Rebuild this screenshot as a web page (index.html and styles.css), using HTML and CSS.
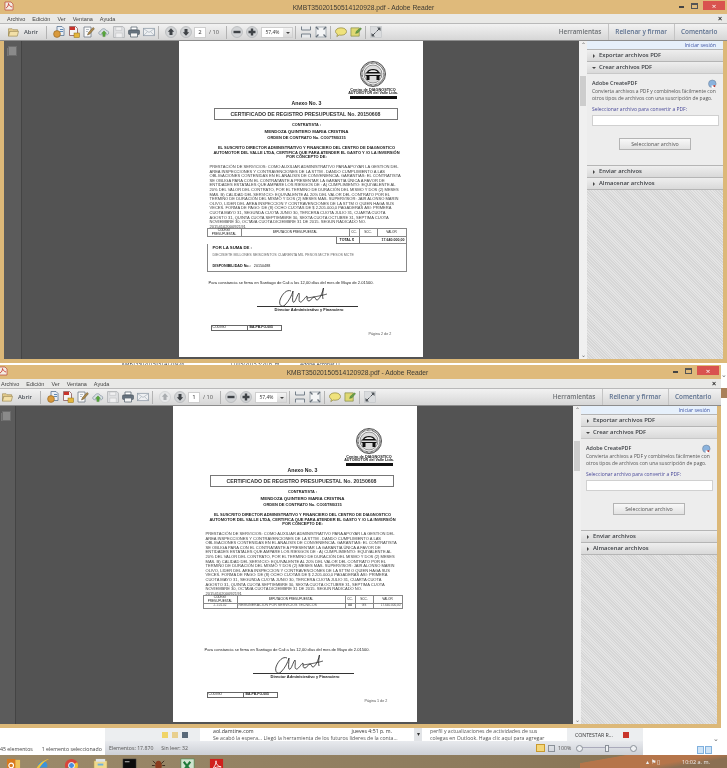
FILE: index.html
```html
<!DOCTYPE html>
<html lang="es">
<head>
    <meta charset="UTF-8">
    <title>KMBT35020150514120928.pdf - Adobe Reader</title>
    <link rel="stylesheet" href="styles.css">
</head>
<body>

<svg class="sprite" width="0" height="0">
    <symbol id="i-folder" viewBox="0 0 12 10"><path d="M.5 1.500h4l1 1h5v2h-9l-1 5z" fill="#e8cf8e" stroke="#9a8653" stroke-width=".7"/><path d="M.5 9.500l1.600-5.200h9.400l-1.400 5.200z" fill="#f3e0a8" stroke="#9a8653" stroke-width=".7"/></symbol>
    <symbol id="i-create" viewBox="0 0 12 12"><path d="M4 .5h5l2 2v7H4z" fill="#e9eef5" stroke="#5a7592" stroke-width=".8"/><circle cx="4" cy="8" r="3.400" fill="#d99a3c" stroke="#8b6020" stroke-width=".6"/><path d="M7 3.500h3M7 5.500h3" stroke="#5f89b5"/></symbol>
    <symbol id="i-lock" viewBox="0 0 12 12"><path d="M1.500.5h6l2 2v7h-8z" fill="#f4f4f4" stroke="#8a5555" stroke-width=".8"/><path d="M2 1h5v3H2z" fill="#c9332b"/><rect x="6" y="7" width="5.500" height="4.500" fill="#e5b63c" stroke="#8c6c16" stroke-width=".5"/></symbol>
    <symbol id="i-sign" viewBox="0 0 12 12"><path d="M1 1h7v10H1z" fill="#fafafa" stroke="#6f7a86" stroke-width=".8"/><path d="M3 3.500h3M3 5.500h2" stroke="#9aa3ad" stroke-width=".7"/><path d="M4.500 9l1-2.500L10 1.500l1.400 1.200L6.800 8z" fill="#b08a4a" stroke="#5b4a2a" stroke-width=".5"/></symbol>
    <symbol id="i-cloud" viewBox="0 0 13 11"><path d="M3 8.500C.2 8.500.2 4.800 2.800 4.600 3.400 1.500 8 1 9 4c3-.3 3.700 4.500.6 4.500z" fill="#d9dfe5" stroke="#7d8c99" stroke-width=".7"/><path d="M6.500 4.200L9.200 7H7.700v3.500H5.300V7H3.800z" fill="#58a83c" stroke="#3a7c25" stroke-width=".4"/></symbol>
    <symbol id="i-save" viewBox="0 0 11 11"><path d="M.5.5h8.500l1.500 1.500v8.500H.5z" fill="#dfe0e2" stroke="#b2b4b7" stroke-width=".8"/><path d="M2.500 1h5.500v3H2.500zM2.500 6.500h6v4h-6z" fill="#f0f0f1" stroke="#bcbec1" stroke-width=".5"/></symbol>
    <symbol id="i-print" viewBox="0 0 12 11"><path d="M3 .5h6v3H3z" fill="#fff" stroke="#5d6975" stroke-width=".8"/><rect x=".5" y="3.500" width="11" height="4.500" rx="1" fill="#66727e" stroke="#47525c" stroke-width=".6"/><path d="M2.500 6.500h7v4h-7z" fill="#f4f4f4" stroke="#5d6975" stroke-width=".8"/></symbol>
    <symbol id="i-mail" viewBox="0 0 13 9"><rect x=".5" y=".5" width="12" height="8" fill="#eef0f2" stroke="#8d99a5" stroke-width=".8"/><path d="M.8 1l5.700 4L12.200 1M.8 8.200l4-4M12.200 8.200l-4-4" fill="none" stroke="#a0abb5" stroke-width=".7"/></symbol>
    <symbol id="i-up" viewBox="0 0 12 12"><circle cx="6" cy="6" r="5.500" fill="#d2d4d6" stroke="#a9acaf" stroke-width=".6"/><path d="M6 2.200L9.200 5.800H7.500V9h-3V5.800H2.800z" fill="#3f4347"/></symbol>
    <symbol id="i-up-off" viewBox="0 0 12 12"><circle cx="6" cy="6" r="5.500" fill="#e6e7e8" stroke="#c7c9cb" stroke-width=".6"/><path d="M6 2.200L9.200 5.800H7.500V9h-3V5.800H2.800z" fill="#a9acaf"/></symbol>
    <symbol id="i-down" viewBox="0 0 12 12"><circle cx="6" cy="6" r="5.500" fill="#d2d4d6" stroke="#a9acaf" stroke-width=".6"/><path d="M6 9.800L9.200 6.200H7.500V3h-3v3.200H2.800z" fill="#3f4347"/></symbol>
    <symbol id="i-minus" viewBox="0 0 12 12"><circle cx="6" cy="6" r="5.500" fill="#d2d4d6" stroke="#a9acaf" stroke-width=".6"/><path d="M2.500 4.800h7v2.400h-7z" fill="#3f4347"/></symbol>
    <symbol id="i-plus" viewBox="0 0 12 12"><circle cx="6" cy="6" r="5.500" fill="#d2d4d6" stroke="#a9acaf" stroke-width=".6"/><path d="M4.800 2.500h2.400v2.300h2.300v2.400H7.200v2.300H4.800V7.200H2.500V4.800h2.300z" fill="#3f4347"/></symbol>
    <symbol id="i-fitw" viewBox="0 0 12 12"><path d="M1.500.5v3.500h9V.5M1.500 11.500V8h9v3.500" fill="#e8eaec" stroke="#76808a"/></symbol>
    <symbol id="i-fitp" viewBox="0 0 12 12"><rect x="1" y="1" width="10" height="10" fill="#f4f5f6" stroke="#a3abb2"/><path d="M1 1l2.500 2.500M11 1L8.500 3.500M1 11l2.500-2.500M11 11L8.500 8.500" stroke="#67707a" stroke-width="1.400"/></symbol>
    <symbol id="i-comment" viewBox="0 0 13 11"><path d="M6.500 1C10 1 12.500 2.700 12.500 5S10 9 6.500 9c-.7 0-1.300 0-2-.2L2 10.500l.6-2.700C1.300 7 .5 6 .5 5c0-2.300 2.500-4 6-4z" fill="#efe27c" stroke="#87803b" stroke-width=".7"/></symbol>
    <symbol id="i-note" viewBox="0 0 13 11"><path d="M1 1h9v9H1z" fill="#dfd873" stroke="#7d8545" stroke-width=".7"/><path d="M6 7l1-2.500L11.500 1 12.500 2 8.500 6.500z" fill="#6aa04a" stroke="#3f6b2a" stroke-width=".4"/></symbol>
    <symbol id="i-expand" viewBox="0 0 12 12"><rect x=".5" y=".5" width="11" height="11" fill="#dadcde" stroke="#bfc2c5" stroke-width=".6"/><path d="M7 1.500h3.500V5zM5 10.500H1.500V7z" fill="#4b5055"/><path d="M9 3L6.500 5.500M3 9l2.500-2.500" stroke="#4b5055"/></symbol>
    <symbol id="i-create-big" viewBox="0 0 10 10"><circle cx="4.800" cy="4.800" r="4.200" fill="#8bb3dd" stroke="#6a7f99" stroke-width=".6"/><path d="M4 6.500h4.500v3H4z" fill="#fff"/><path d="M5 7l3-1v3z" fill="#b3302a"/></symbol>
    <symbol id="i-seal" viewBox="0 0 26 26"><circle cx="13" cy="13" r="12.500" fill="#fff" stroke="#222" stroke-width=".8"/><circle cx="13" cy="13" r="11" fill="none" stroke="#444" stroke-width="1.600" stroke-dasharray=".7 .6"/><circle cx="13" cy="13" r="9" fill="#ddd" stroke="#333" stroke-width=".5"/><path d="M7 11c1-4 11-4 12 0l1.500 1v3H5.500v-3z" fill="#111"/><path d="M8.500 11c1-2.500 8-2.500 9 0z" fill="#eee"/><rect x="5.500" y="12.500" width="15" height="1.500" fill="#ddd"/><rect x="6.500" y="15" width="3" height="4" fill="#111"/><rect x="16.500" y="15" width="3" height="4" fill="#111"/></symbol>
    <symbol id="i-sign-a" viewBox="0 0 56 22"><path d="M16 3C12 1 7 6 5 12c-1.500 5 2 8 5 5 4-4 7-10 8-14 0 5-1 9 0 11 2 2 4-7 6-9 1 3-1 8 1 9s5-5 7-6c0 3 0 5 2 5s3-4 5-4 1 3 3 3 6-7 7-15c-1 6-2 11-1 14" fill="none" stroke="#222" stroke-width=".8"/><path d="M32 10c6-1 14-2 20-4" fill="none" stroke="#222" stroke-width=".7"/></symbol>
    <symbol id="i-outlook" viewBox="0 0 16 16"><rect x="5" y="2" width="10" height="12" fill="#f0c35a"/><rect x="1" y="1" width="9" height="14" fill="#d87a1e"/><circle cx="5.500" cy="8" r="2.500" fill="none" stroke="#fff" stroke-width="1.200"/></symbol>
    <symbol id="i-ie" viewBox="0 0 16 16"><path d="M3 9c0-4 5-7 8-5s2 5 2 6H6c.5 2.500 4 2.500 6 .8C11 14 3 15 3 9z" fill="#3c93d9"/><path d="M1 13C2 8 8 2 15 1c-5 2-10 8-12 13z" fill="#f0c33c"/></symbol>
    <symbol id="i-chrome" viewBox="0 0 16 16"><circle cx="8" cy="8" r="7" fill="#d9453a"/><path d="M8 8L2 11.500A7 7 0 0 0 8 15z" fill="#3aa04b"/><path d="M8 8l6-3.500a7 7 0 0 1-6 10.500z" fill="#edc235"/><circle cx="8" cy="8" r="3.200" fill="#4a8de0" stroke="#fff"/></symbol>
    <symbol id="i-explorer" viewBox="0 0 16 16"><rect x="1" y="3" width="14" height="12" fill="#efd98c" stroke="#a78e4c" stroke-width=".6"/><rect x="3" y="1" width="10" height="3" fill="#dde3e8"/><rect x="5" y="6" width="6" height="2" fill="#6db2dd"/></symbol>
    <symbol id="i-cmd" viewBox="0 0 16 16"><rect x="1" y="1" width="14" height="14" fill="#0c0c0c" stroke="#555" stroke-width=".5"/><path d="M3 4h5" stroke="#ccc"/></symbol>
    <symbol id="i-bug" viewBox="0 0 16 16"><ellipse cx="8" cy="8" rx="3.500" ry="5" fill="#8a3c1e"/><path d="M2 3l3 3M14 3l-3 3M1 8h3M15 8h-3M2 14l3-3M14 14l-3-3" stroke="#3a2a1e"/></symbol>
    <symbol id="i-excel" viewBox="0 0 16 16"><rect x="1" y="1" width="14" height="14" fill="#cfe3cf" stroke="#3d8a4c" stroke-width=".6"/><path d="M4 4l7 9M11 4l-7 9" stroke="#1f7a3a" stroke-width="2.200"/></symbol>
    <symbol id="i-reader" viewBox="0 0 16 16"><rect x="1" y="1" width="14" height="14" fill="#d0201c"/><path d="M3 12c3-2 5-7 4.500-9-.5 3 2 6 5.500 6.500-3-.5-7 .5-10 2.500z" fill="none" stroke="#fff" stroke-width=".9"/></symbol>
    <symbol id="i-app" viewBox="0 0 10 10"><path d="M1 1h6l2 2v6H1z" fill="#f3ece0" stroke="#b9443a" stroke-width=".7"/><path d="M2 7c2-1 2.500-3 2.500-4.500C5 4 6 5.500 8 6" fill="none" stroke="#c4261e" stroke-width=".8"/></symbol>
</svg>

<div class="desktop">

    <div class="peek">
        <span class="peek-one">KMBT35020150514120928</span>
        <span class="peek-two">11/05/2015 3:20 p. m.</span>
        <span class="peek-three">Adobe Acrobat D...</span>
    </div>

    <div class="edge-strip">
        <span class="edge-chevron">⌄</span>
        <div class="edge-brown"></div>
    </div>

    <section class="window window-one">
        <header class="title-bar">
            <svg class="app-icon"><use href="#i-app"/></svg>
            <span class="title-text">KMBT35020150514120928.pdf - Adobe Reader</span>
            <div class="win-controls">
                <span class="win-min"></span>
                <span class="win-max"></span>
                <span class="win-close">×</span>
            </div>
        </header>
        <nav class="menu-bar">
            <span>Archivo</span><span>Edición</span><span>Ver</span><span>Ventana</span><span>Ayuda</span>
            <span class="menu-close">×</span>
        </nav>
        <div class="toolbar">
            <svg class="icon-folder"><use href="#i-folder"/></svg>
            <span class="open-label">Abrir</span>
            <i class="sep sep-first"></i>
            <div class="tools"><svg><use href="#i-create"/></svg></div>
            <div class="tools"><svg><use href="#i-lock"/></svg></div>
            <div class="tools"><svg><use href="#i-sign"/></svg></div>
            <div class="tools"><svg><use href="#i-cloud"/></svg></div>
            <div class="tools"><svg><use href="#i-save"/></svg></div>
            <div class="tools"><svg><use href="#i-print"/></svg></div>
            <div class="tools"><svg><use href="#i-mail"/></svg></div>
            <i class="sep"></i>
            <div class="tools nav-first"><svg><use href="#i-up"/></svg></div>
            <div class="tools"><svg><use href="#i-down"/></svg></div>
            <span class="page-input">2</span>
            <span class="page-total">/ 10</span>
            <i class="sep"></i>
            <div class="tools"><svg><use href="#i-minus"/></svg></div>
            <div class="tools"><svg><use href="#i-plus"/></svg></div>
            <span class="zoom-combo"><b>57,4%</b><em></em></span>
            <i class="sep"></i>
            <div class="tools"><svg><use href="#i-fitw"/></svg></div>
            <div class="tools"><svg><use href="#i-fitp"/></svg></div>
            <i class="sep"></i>
            <div class="tools"><svg><use href="#i-comment"/></svg></div>
            <div class="tools"><svg><use href="#i-note"/></svg></div>
            <i class="sep"></i>
            <div class="tools"><svg><use href="#i-expand"/></svg></div>
            <div class="tabs">
                <span class="tab tab-tools">Herramientas</span>
                <span class="tab tab-fill">Rellenar y firmar</span>
                <span class="tab tab-comment">Comentario</span>
            </div>
        </div>
        <div class="main">
            <aside class="nav-pane"><span class="pages-icon"></span></aside>
            <div class="doc-area">
                <article class="page">
                    <div class="doc doc-one">
                        <div class="seal">
                            <svg class="seal-mark"><use href="#i-seal"/></svg>
                            <p class="seal-line">Centro de DIAGNOSTICO</p>
                            <p class="seal-line seal-strong">AUTOMOTOR del Valle Ltda.</p>
                            <div class="seal-bar"></div>
                        </div>
                        <p class="annex">Anexo No. 3</p>
                        <h2 class="cert-box">CERTIFICADO DE REGISTRO PRESUPUESTAL No. 20150608</h2>
                        <p class="center-bold contractor-label">CONTRATISTA :</p>
                        <p class="center-bold contractor-name">MENDOZA QUINTERO MARIA CRISTINA</p>
                        <p class="center-bold contract-no">ORDEN DE CONTRATO No. CO07TM0315</p>
                        <p class="center-bold statement">EL SUSCRITO DIRECTOR ADMINISTRATIVO Y FINANCIERO DEL CENTRO DE DIAGNOSTICO<br>AUTOMOTOR DEL VALLE LTDA, CERTIFICA QUE PARA ATENDER EL GASTO Y /O LA INVERSIÓN<br>POR CONCEPTO DE:</p>
                        <p class="body-text">PRESTACIÓN DE SERVICIOS: COMO AUXILIAR ADMINISTRATIVO PARA APOYAR LA GESTION DEL<br>ÁREA INSPECCIONES Y CONTRAVENCIONES DE LA STTM . DANDO CUMPLIMIENTO A LAS<br>OBLIGACIONES CONTENIDAS EN EL ANÁLISIS DE CONVENIENCIA. GARANTÍAS: EL CONTRATISTA<br>SE OBLIGA PARA CON EL CONTRATANTE A PRESENTAR LA GARANTÍA ÚNICA A FAVOR DE<br>ENTIDADES ESTATALES QUE AMPARE LOS RIESGOS DE : A) CUMPLIMIENTO: EQUIVALENTE AL<br>20% DEL VALOR DEL CONTRATO, POR EL TERMINO DE DURACIÓN DEL MISMO Y DOS (2) MESES<br>MÁS. B) CALIDAD DEL SERVICIO: EQUIVALENTE AL 20% DEL VALOR DEL CONTRATO POR EL<br>TERMINO DE DURACIÓN DEL MISMO Y DOS (2) MESES MÁS. SUPERVISOR: JAIR ALONSO MARIN<br>OLIVO, LIDER DEL ÁREA INSPECCION Y CONTRAVENCIONES DE LA STTM O QUIEN HAGA SUS<br>VECES. FORMA DE PAGO: DE (8) OCHO CUOTAS DE $ 2.205.000,0 PAGADERAS ASI: PRIMERA<br>CUOTA MAYO 31, SEGUNDA CUOTA JUNIO 30, TERCERA CUOTA JULIO 31, CUARTA CUOTA<br>AGOSTO 31, QUINTA CUOTA SEPTIEMBRE 30, SEXTA CUOTA OCTUBRE 31, SEPTIMA CUOTA<br>NOVIEMBRE 30, OCTAVA CUOTA DICIEMBRE 31 DE 2015. SEGUN RADICADO NO.<br>2015410200092191</p>
                        <table class="budget">
                            <tr><th>CODIGO<br>PRESUPUESTAL</th><th>IMPUTACION PRESUPUESTAL</th><th>CC.</th><th>SCC.</th><th>VALOR</th></tr>
                        </table>
                        <div class="total-row"><b>TOTAL $</b><span>17.640.000,00</span></div>
                        <div class="sum-box">
                            <p class="sum-label">POR LA SUMA DE :</p>
                            <p class="sum-words">DIECISIETE MILLONES SEISCIENTOS CUARENTA MIL PESOS M/CTE PESOS MCTE</p>
                            <p class="sum-avail"><b>DISPONIBILIDAD No.:</b> 20150488</p>
                        </div>
                        <p class="closing closing-one">Para constancia se firma en Santiago de Cali a los 12,00 días del mes de Mayo de 2.01500.</p>
                        <div class="sign">
                            <svg class="sign-mark"><use href="#i-sign-a"/></svg>
                            <div class="sign-line"></div>
                            <p class="sign-name">Director Administrativo y Financiero</p>
                        </div>
                        <div class="doc-foot">
                            <div class="code-box"><span>CODIGO</span><b>BA-PB-FO-005</b></div>
                            <span class="page-no">Página 2 de 2</span>
                        </div>
                    </div>
                </article>
            </div>
            <div class="scroll"><span class="arrow">⌃</span><span class="thumb"></span><span class="arrow arrow-down">⌄</span></div>
            <aside class="side">
                <p class="login">Iniciar sesión</p>
                <h3 class="acc">Exportar archivos PDF</h3>
                <h3 class="acc acc-open">Crear archivos PDF</h3>
                <div class="acc-body">
                    <div class="acc-head"><b>Adobe CreatePDF</b><svg><use href="#i-create-big"/></svg></div>
                    <p class="acc-text">Convierta archivos a PDF y combínelos fácilmente con otros tipos de archivos con una suscripción de pago.</p>
                    <p class="acc-pick">Seleccionar archivo para convertir a PDF:</p>
                    <div class="acc-input"></div>
                    <div class="acc-btn">Seleccionar archivo</div>
                </div>
                <h3 class="acc">Enviar archivos</h3>
                <h3 class="acc">Almacenar archivos</h3>
                <div class="hatch"></div>
            </aside>
        </div>
    </section>

    <section class="window window-two">
        <header class="title-bar">
            <svg class="app-icon"><use href="#i-app"/></svg>
            <span class="title-text">KMBT35020150514120928.pdf - Adobe Reader</span>
            <div class="win-controls">
                <span class="win-min"></span>
                <span class="win-max"></span>
                <span class="win-close">×</span>
            </div>
        </header>
        <nav class="menu-bar">
            <span>Archivo</span><span>Edición</span><span>Ver</span><span>Ventana</span><span>Ayuda</span>
            <span class="menu-close">×</span>
        </nav>
        <div class="toolbar">
            <svg class="icon-folder"><use href="#i-folder"/></svg>
            <span class="open-label">Abrir</span>
            <i class="sep sep-first"></i>
            <div class="tools"><svg><use href="#i-create"/></svg></div>
            <div class="tools"><svg><use href="#i-lock"/></svg></div>
            <div class="tools"><svg><use href="#i-sign"/></svg></div>
            <div class="tools"><svg><use href="#i-cloud"/></svg></div>
            <div class="tools"><svg><use href="#i-save"/></svg></div>
            <div class="tools"><svg><use href="#i-print"/></svg></div>
            <div class="tools"><svg><use href="#i-mail"/></svg></div>
            <i class="sep"></i>
            <div class="tools nav-first"><svg><use href="#i-up-off"/></svg></div>
            <div class="tools"><svg><use href="#i-down"/></svg></div>
            <span class="page-input">1</span>
            <span class="page-total">/ 10</span>
            <i class="sep"></i>
            <div class="tools"><svg><use href="#i-minus"/></svg></div>
            <div class="tools"><svg><use href="#i-plus"/></svg></div>
            <span class="zoom-combo"><b>57,4%</b><em></em></span>
            <i class="sep"></i>
            <div class="tools"><svg><use href="#i-fitw"/></svg></div>
            <div class="tools"><svg><use href="#i-fitp"/></svg></div>
            <i class="sep"></i>
            <div class="tools"><svg><use href="#i-comment"/></svg></div>
            <div class="tools"><svg><use href="#i-note"/></svg></div>
            <i class="sep"></i>
            <div class="tools"><svg><use href="#i-expand"/></svg></div>
            <div class="tabs">
                <span class="tab tab-tools">Herramientas</span>
                <span class="tab tab-fill">Rellenar y firmar</span>
                <span class="tab tab-comment">Comentario</span>
            </div>
        </div>
        <div class="main">
            <aside class="nav-pane"><span class="pages-icon"></span></aside>
            <div class="doc-area">
                <article class="page">
                    <div class="doc doc-two">
                        <div class="seal">
                            <svg class="seal-mark"><use href="#i-seal"/></svg>
                            <p class="seal-line">Centro de DIAGNOSTICO</p>
                            <p class="seal-line seal-strong">AUTOMOTOR del Valle Ltda.</p>
                            <div class="seal-bar"></div>
                        </div>
                        <p class="annex">Anexo No. 3</p>
                        <h2 class="cert-box">CERTIFICADO DE REGISTRO PRESUPUESTAL No. 20150608</h2>
                        <p class="center-bold contractor-label">CONTRATISTA :</p>
                        <p class="center-bold contractor-name">MENDOZA QUINTERO MARIA CRISTINA</p>
                        <p class="center-bold contract-no">ORDEN DE CONTRATO No. CO05TM0315</p>
                        <p class="center-bold statement">EL SUSCRITO DIRECTOR ADMINISTRATIVO Y FINANCIERO DEL CENTRO DE DIAGNOSTICO<br>AUTOMOTOR DEL VALLE LTDA, CERTIFICA QUE PARA ATENDER EL GASTO Y /O LA INVERSIÓN<br>POR CONCEPTO DE:</p>
                        <p class="body-text">PRESTACIÓN DE SERVICIOS: COMO AUXILIAR ADMINISTRATIVO PARA APOYAR LA GESTION DEL<br>ÁREA INSPECCIONES Y CONTRAVENCIONES DE LA STTM . DANDO CUMPLIMIENTO A LAS<br>OBLIGACIONES CONTENIDAS EN EL ANÁLISIS DE CONVENIENCIA. GARANTÍAS: EL CONTRATISTA<br>SE OBLIGA PARA CON EL CONTRATANTE A PRESENTAR LA GARANTÍA ÚNICA A FAVOR DE<br>ENTIDADES ESTATALES QUE AMPARE LOS RIESGOS DE : A) CUMPLIMIENTO: EQUIVALENTE AL<br>20% DEL VALOR DEL CONTRATO, POR EL TERMINO DE DURACIÓN DEL MISMO Y DOS (2) MESES<br>MÁS. B) CALIDAD DEL SERVICIO: EQUIVALENTE AL 20% DEL VALOR DEL CONTRATO POR EL<br>TERMINO DE DURACIÓN DEL MISMO Y DOS (2) MESES MÁS. SUPERVISOR: JAIR ALONSO MARIN<br>OLIVO, LIDER DEL ÁREA INSPECCION Y CONTRAVENCIONES DE LA STTM O QUIEN HAGA SUS<br>VECES. FORMA DE PAGO: DE (8) OCHO CUOTAS DE $ 2.205.000,0 PAGADERAS ASI: PRIMERA<br>CUOTA MAYO 31, SEGUNDA CUOTA JUNIO 30, TERCERA CUOTA JULIO 31, CUARTA CUOTA<br>AGOSTO 31, QUINTA CUOTA SEPTIEMBRE 30, SEXTA CUOTA OCTUBRE 31, SEPTIMA CUOTA<br>NOVIEMBRE 30, OCTAVA CUOTA DICIEMBRE 31 DE 2015. SEGUN RADICADO NO.<br>2015410200092191</p>
                        <table class="budget">
                            <tr><th>CODIGO<br>PRESUPUESTAL</th><th>IMPUTACION PRESUPUESTAL</th><th>CC.</th><th>SCC.</th><th>VALOR</th></tr>
                            <tr><td>2.1.01.02</td><td class="left">REMUNERACION POR SERVICIOS TECNICOS</td><td>AA</td><td>GS</td><td class="right">17.640.000,00</td></tr>
                        </table>
                        <p class="closing closing-two">Para constancia se firma en Santiago de Cali a los 12,00 días del mes de Mayo de 2.01500.</p>
                        <div class="sign">
                            <svg class="sign-mark"><use href="#i-sign-a"/></svg>
                            <div class="sign-line"></div>
                            <p class="sign-name">Director Administrativo y Financiero</p>
                        </div>
                        <div class="doc-foot">
                            <div class="code-box"><span>CODIGO</span><b>BA-PB-FO-005</b></div>
                            <span class="page-no">Página 1 de 2</span>
                        </div>
                    </div>
                </article>
            </div>
            <div class="scroll"><span class="arrow">⌃</span><span class="thumb"></span><span class="arrow arrow-down">⌄</span></div>
            <aside class="side">
                <p class="login">Iniciar sesión</p>
                <h3 class="acc">Exportar archivos PDF</h3>
                <h3 class="acc acc-open">Crear archivos PDF</h3>
                <div class="acc-body">
                    <div class="acc-head"><b>Adobe CreatePDF</b><svg><use href="#i-create-big"/></svg></div>
                    <p class="acc-text">Convierta archivos a PDF y combínelos fácilmente con otros tipos de archivos con una suscripción de pago.</p>
                    <p class="acc-pick">Seleccionar archivo para convertir a PDF:</p>
                    <div class="acc-input"></div>
                    <div class="acc-btn">Seleccionar archivo</div>
                </div>
                <h3 class="acc">Enviar archivos</h3>
                <h3 class="acc">Almacenar archivos</h3>
                <div class="hatch"></div>
            </aside>
        </div>
    </section>

    <section class="behind">
        <div class="explorer">
            <span class="count">45 elementos</span>
            <span class="selected">1 elemento seleccionado</span>
        </div>
        <div class="outlook">
            <div class="outlook-top">
                <div class="quick"><i class="q-yellow"></i><i class="q-folder"></i><i class="q-dark"></i></div>
                <div class="mail-row">
                    <div class="mail-from"><span>aol.damtine.com</span><span>jueves 4:51 p. m.</span></div>
                    <p>Se acabó la espera... Llegó la herramienta de los futuros líderes de la conta...</p>
                </div>
                <span class="mail-drop">▾</span>
                <p class="social">perfil y actualizaciones de actividades de sus<br>colegas en Outlook. Haga clic aquí para agregar</p>
                <div class="reply"><span>CONTESTAR R...</span><i class="flag"></i></div>
            </div>
            <div class="outlook-status">
                <span>Elementos: 17.870</span>
                <span>Sin leer: 32</span>
                <div class="zoom-area">
                    <i class="view-on"></i>
                    <i class="view-off"></i>
                    <span>100%</span>
                    <div class="slider"><i></i><b></b><i></i></div>
                </div>
            </div>
        </div>
        <div class="explorer-views"><span class="views-chevron">⌄</span><div class="views-icons"><i></i><i></i></div></div>
    </section>

    <footer class="taskbar">
        <svg><use href="#i-outlook"/></svg>
        <svg><use href="#i-ie"/></svg>
        <svg><use href="#i-chrome"/></svg>
        <svg><use href="#i-explorer"/></svg>
        <svg><use href="#i-cmd"/></svg>
        <svg><use href="#i-bug"/></svg>
        <svg><use href="#i-excel"/></svg>
        <svg><use href="#i-reader"/></svg>
        <div class="tray">
            <span class="tray-icons">▴ ⚑ ▯</span>
            <span class="clock">10:02 a. m.</span>
        </div>
    </footer>
</div>

</body>
</html>
```

FILE: styles.css
```css
* {
    box-sizing: border-box;
}
html, body {
    margin: 0;
    padding: 0;
    overflow: hidden;
}
p, h2, h3 {
    margin: 0;
    font-weight: normal;
}
.sprite {
    position: absolute;
}
.desktop {
    position: relative;
    width: 727px;
    height: 768px;
    overflow: hidden;
    background: #fff;
    font-family: "Open Sans", "Liberation Sans", sans-serif;
    color: #333;
    filter: blur(0.35px);
}

/* windows sit on the desktop */
.window {
    position: absolute;
    width: 727px;
    height: 363px;
    display: flex;
    flex-direction: column;
    background: #dcb878;
}
.window-one {
    left: 0;
    top: 0;
}
.window-two {
    left: -6px;
    top: 365px;
}
.title-bar {
    height: 14px;
    flex: none;
    display: flex;
    align-items: center;
    justify-content: center;
    position: relative;
    background: #dfba7b;
}
.app-icon {
    position: absolute;
    left: 4px;
    top: 1px;
    width: 10px;
    height: 10px;
}
.title-text {
    font-family: "Liberation Sans", Arial, sans-serif;
    font-size: 6.7px;
    color: #3d3a33;
}
.win-controls {
    position: absolute;
    right: 2px;
    top: 1px;
    display: flex;
    align-items: center;
    height: 9px;
}
.win-min {
    width: 5px;
    height: 2px;
    background: #444;
    margin-top: 3px;
    margin-right: 7px;
}
.win-max {
    width: 7px;
    height: 6px;
    border: 1px solid #555;
    border-top-width: 2px;
    margin-right: 5px;
}
.win-close {
    width: 22px;
    height: 9px;
    background: #d9534f;
    color: #fff;
    font-size: 8px;
    line-height: 9px;
    text-align: center;
}
.menu-bar {
    height: 9px;
    flex: none;
    display: flex;
    align-items: center;
    gap: 7px;
    padding-left: 7px;
    background: #e9e9e7;
    font-family: "Liberation Sans", Arial, sans-serif;
    font-size: 5.5px;
    color: #444;
}
.menu-close {
    margin-left: auto;
    margin-right: 5px;
    font-weight: bold;
    font-size: 7px;
    color: #222;
}
.toolbar {
    height: 18px;
    flex: none;
    display: flex;
    align-items: center;
    padding-left: 8px;
    background: linear-gradient(#f2f2f2, #d6d6d6);
    border-top: 1px solid #b9b9b9;
    border-bottom: 1px solid #8d8d8d;
}
.icon-folder {
    width: 11px;
    height: 10px;
    flex: none;
}
.open-label {
    width: 22px;
    margin-left: 5px;
    font-size: 5.8px;
    font-weight: 600;
    color: #4b5158;
}
.sep {
    display: block;
    width: 1px;
    height: 13px;
    flex: none;
    margin: 0 2px;
    background: #b3b3b3;
}
.sep-first {
    margin: 0 4px 0 0;
}
.tools {
    width: 15px;
    height: 12px;
    flex: none;
    display: flex;
    justify-content: center;
}
.tools svg {
    width: 12px;
    height: 12px;
}
.nav-first {
    margin-left: 2px;
}
.page-input {
    width: 12px;
    height: 11px;
    margin-left: 1px;
    background: #fff;
    border: 1px solid #cfcfcf;
    font-size: 6px;
    line-height: 9px;
    text-align: center;
}
.page-total {
    width: 15px;
    margin-left: 3px;
    font-size: 5.6px;
    color: #555;
}
.zoom-combo {
    width: 32px;
    height: 11px;
    margin-left: 2px;
    display: flex;
    background: #fff;
    border: 1px solid #cfcfcf;
}
.zoom-combo b {
    flex: 1;
    font-weight: normal;
    font-size: 5px;
    line-height: 9px;
    text-align: center;
}
.zoom-combo em {
    width: 9px;
    background: linear-gradient(#f4f4f4, #d8d8d8);
    position: relative;
}
.zoom-combo em::after {
    content: "";
    position: absolute;
    left: 3px;
    top: 4px;
    border: 2px solid transparent;
    border-top-color: #444;
}
.tabs {
    margin-left: auto;
    height: 100%;
    display: flex;
    align-items: center;
    padding-right: 3px;
    font-size: 6.4px;
    font-weight: 600;
}
.tab {
    display: block;
    line-height: 16px;
    padding: 0 6.5px;
    border-left: 1px solid #c4c4c4;
    white-space: nowrap;
}
.tab-tools {
    border-left: 0;
    color: #6b6f73;
}
.tab-fill, .tab-comment {
    color: #5b6f8e;
}
.main {
    flex: 1;
    min-height: 0;
    display: flex;
    margin: 0 4px 4px;
    background: #535353;
}
.nav-pane {
    width: 18px;
    flex: none;
    background: #5b5b5b;
    border-right: 1px solid #444;
    padding: 5px 0 0 4px;
}
.pages-icon {
    display: block;
    width: 9px;
    height: 10px;
    background: #8a8a8a;
    border: 1px solid #6d6d6d;
    box-shadow: -2px 1px 0 -1px #777;
}
.doc-area {
    flex: 1;
    min-width: 0;
    display: flex;
    justify-content: center;
    overflow: hidden;
}
.scroll {
    width: 8px;
    flex: none;
    display: flex;
    flex-direction: column;
    align-items: center;
    background: #f0f0f0;
    color: #666;
    font-size: 6px;
    line-height: 8px;
}
.arrow {
    display: block;
    height: 8px;
}
.thumb {
    display: block;
    width: 6px;
    height: 30px;
    margin-top: 27px;
    background: #cdcdcd;
}
.arrow-down {
    margin-top: auto;
}

/* right hand panel */
.side {
    width: 136px;
    flex: none;
    display: flex;
    flex-direction: column;
    background: #ededed;
}
.login {
    height: 8px;
    padding-right: 7px;
    background: #e6f0fb;
    color: #3f55a5;
    font-size: 5.2px;
    line-height: 8px;
    text-align: right;
}
.acc {
    height: 12px;
    flex: none;
    padding-left: 12px;
    position: relative;
    background: linear-gradient(#eeeeee, #d9d9d9);
    border-top: 1px solid #b5b5b5;
    font-size: 5.85px;
    font-weight: 600;
    line-height: 11px;
    color: #3d4045;
}
.acc::before {
    content: "";
    position: absolute;
    left: 6px;
    top: 4px;
    border: 2px solid transparent;
    border-left-color: #444;
}
.acc-open::before {
    left: 5px;
    top: 5px;
    border-left-color: transparent;
    border-top-color: #444;
}
.acc-body {
    height: 92px;
    flex: none;
    padding: 5px 4px 0 5px;
    background: #ededed;
    border-top: 1px solid #c8c8c8;
}
.acc-head {
    height: 8px;
    display: flex;
    justify-content: space-between;
    font-size: 5.4px;
    line-height: 8px;
    color: #3d4045;
}
.acc-head b {
    font-weight: 600;
}
.acc-head svg {
    width: 9px;
    height: 10px;
    margin-right: 2px;
}
.acc-text {
    margin-top: 1px;
    font-size: 4.95px;
    line-height: 7px;
    color: #555;
}
.acc-pick {
    margin-top: 4px;
    font-size: 5px;
    line-height: 7px;
    color: #4a4a9a;
}
.acc-input {
    height: 11px;
    margin-top: 2px;
    background: #fff;
    border: 1px solid #d0d0d0;
}
.acc-btn {
    width: 72px;
    height: 12px;
    margin: 12px 0 0 27px;
    background: linear-gradient(#f8f8f8, #e2e2e2);
    border: 1px solid #b4b4b4;
    font-size: 5.3px;
    line-height: 10px;
    text-align: center;
    color: #555;
}
.hatch {
    flex: 1;
    border-top: 1px solid #b5b5b5;
    background: repeating-linear-gradient(45deg, #d6d6d6 0 1px, #e4e4e4 1px 2px);
}

/* scanned page */
.page {
    width: 244px;
    height: 316px;
    background: #fff;
    flex: none;
    overflow: hidden;
    color: #222;
    font-family: "Liberation Sans", Arial, sans-serif;
    font-size: 4.07px;
    line-height: 4.6px;
    white-space: nowrap;
}
.doc {
    width: 200px;
    padding-top: 20px;
}
.doc-one {
    margin-left: 28px;
}
.doc-two {
    margin-left: 30px;
    padding-top: 22px;
}
.seal {
    width: 47px;
    height: 38px;
    margin-left: 143px;
    display: flex;
    flex-direction: column;
    align-items: center;
}
.seal-mark {
    width: 26px;
    height: 26px;
    flex: none;
}
.seal-line {
    font-size: 3.8px;
    line-height: 3.4px;
    font-weight: bold;
}
.seal-line:first-of-type {
    margin-top: 2px;
}
.seal-strong {
    font-size: 3.7px;
}
.seal-bar {
    width: 47px;
    height: 2.5px;
    margin-top: .5px;
    background: #111;
}
.annex {
    margin-top: 1px;
    font-size: 5.2px;
    line-height: 6px;
    font-weight: bold;
    text-align: center;
}
.cert-box {
    width: 184px;
    height: 12px;
    margin: 2px 0 0 7px;
    border: 1px solid #777;
    font-size: 5.2px;
    font-weight: bold;
    line-height: 10px;
    text-align: center;
    color: #333;
}
.center-bold {
    text-align: center;
    font-weight: bold;
}
.contractor-label {
    margin-top: 2.5px;
    font-size: 3.8px;
}
.contractor-name {
    margin-top: 2.5px;
    font-size: 4.4px;
}
.contract-no {
    margin-top: 2px;
    font-size: 4px;
}
.statement {
    margin-top: 5.5px;
    font-size: 4.03px;
    line-height: 4.4px;
}
.body-text {
    margin: 5.5px 0 0 3px;
    color: #444;
}
.budget {
    width: 200px;
    table-layout: fixed;
    border-collapse: collapse;
    margin-top: -1px;
    font-size: 3.1px;
    line-height: 3.2px;
}
.budget th:nth-child(1) {
    width: 34px;
}
.budget th:nth-child(3) {
    width: 10px;
}
.budget th:nth-child(4) {
    width: 18px;
}
.budget th:nth-child(5) {
    width: 29px;
}
.budget th, .budget td {
    height: 7.5px;
    padding: 0;
    border: 1px solid #888;
    font-weight: normal;
    text-align: center;
}
.budget td {
    height: 5px;
    color: #555;
}
.budget .left {
    text-align: left;
    padding-left: 1px;
    font-size: 3.6px;
}
.budget .right {
    text-align: right;
    padding-right: 1px;
}
.total-row {
    display: flex;
    height: 7px;
    margin-left: 129px;
    line-height: 6px;
    font-size: 3.6px;
}
.total-row b {
    width: 24px;
    padding-left: 3px;
    border: 1px solid #777;
    border-top: 0;
}
.total-row span {
    width: 47px;
    text-align: right;
    padding-right: 1px;
    font-weight: bold;
    border-bottom: 1px solid #888;
    border-right: 1px solid #888;
}
.sum-box {
    height: 28px;
    padding: 2px 0 0 5px;
    border: 1px solid #888;
    border-top: 0;
}
.sum-label {
    font-size: 4.3px;
    font-weight: bold;
}
.sum-words {
    margin-top: 3px;
    font-size: 3.6px;
    color: #666;
}
.sum-avail {
    margin-top: 6px;
    font-size: 3.7px;
}
.sum-avail b {
    margin-right: 2px;
}
.closing {
    margin-left: 2px;
    font-size: 4.05px;
}
.closing-one {
    margin-top: 9px;
}
.closing-two {
    margin-top: 39px;
}
.sign {
    position: relative;
    height: 21px;
    margin-left: 50px;
    width: 101px;
    margin-top: 2px;
}
.sign-mark {
    position: absolute;
    left: 18px;
    top: 1px;
    width: 56px;
    height: 22px;
}
.sign-line {
    position: absolute;
    left: 0;
    right: 0;
    top: 19px;
    height: 1px;
    background: #333;
}
.sign-name {
    position: absolute;
    left: 18px;
    top: 21px;
    font-size: 4px;
    font-weight: bold;
}
.doc-foot {
    display: flex;
    align-items: flex-start;
    margin-top: 17px;
    padding-left: 4px;
}
.code-box {
    width: 71px;
    height: 5.5px;
    display: flex;
    border: 1px solid #666;
    font-size: 3.4px;
    line-height: 3.5px;
}
.code-box span {
    width: 36px;
    padding-left: 1px;
    border-right: 1px solid #666;
}
.code-box b {
    padding-left: 2px;
}
.page-no {
    margin: 7px 0 0 87px;
    font-size: 3.7px;
    color: #555;
}

/* what shows behind the two windows */
.peek {
    position: absolute;
    left: 0;
    top: 363px;
    width: 727px;
    height: 2px;
    overflow: hidden;
    font-size: 5px;
    line-height: 3px;
}
.peek-one {
    position: absolute;
    left: 122px;
    top: 0;
}
.peek-two {
    position: absolute;
    left: 230px;
    top: 0;
}
.peek-three {
    position: absolute;
    left: 300px;
    top: 0;
}
.edge-strip {
    position: absolute;
    right: 0;
    top: 365px;
    width: 6px;
    height: 363px;
    background: #fff;
    color: #666;
    font-size: 7px;
    line-height: 20px;
    text-align: center;
}
.edge-chevron {
    display: block;
    height: 23px;
}
.edge-brown {
    height: 10px;
    background: #a9805a;
}
.behind {
    position: absolute;
    left: 0;
    top: 728px;
    width: 727px;
    height: 27px;
    display: flex;
    background: #fff;
    font-size: 5.2px;
}
.explorer {
    width: 105px;
    flex: none;
    display: flex;
    align-items: flex-end;
    gap: 9px;
    padding-bottom: 2px;
    white-space: nowrap;
    color: #444;
}
.outlook {
    width: 538px;
    flex: none;
    display: flex;
    flex-direction: column;
    background: #eceef0;
}
.outlook-top {
    height: 13px;
    display: flex;
}
.quick {
    width: 95px;
    flex: none;
    display: flex;
    justify-content: flex-end;
    gap: 4px;
    padding: 4px 12px 0 0;
}
.quick i {
    width: 6px;
    height: 6px;
}
.q-yellow {
    background: #f0d468;
}
.q-folder {
    background: #e8cf8e;
}
.q-dark {
    background: #5a6a7a;
}
.mail-row {
    width: 214px;
    flex: none;
    padding: 0 0 0 13px;
    background: #fff;
    white-space: nowrap;
    overflow: hidden;
    color: #555;
    line-height: 6.5px;
}
.mail-from {
    display: flex;
    justify-content: space-between;
    padding-right: 22px;
    color: #333;
}
.mail-drop {
    width: 8px;
    flex: none;
    font-size: 6px;
    line-height: 13px;
    text-align: center;
    background: #e2e4e7;
}
.social {
    width: 145px;
    flex: none;
    padding: 0 0 0 8px;
    background: #fff;
    white-space: nowrap;
    line-height: 6.5px;
    color: #555;
    overflow: hidden;
}
.reply {
    flex: 1;
    display: flex;
    align-items: center;
    justify-content: space-between;
    padding: 0 14px 0 8px;
    font-size: 5.2px;
}
.flag {
    width: 6px;
    height: 6px;
    background: #c8352b;
}
.outlook-status {
    height: 14px;
    display: flex;
    align-items: center;
    gap: 8px;
    padding: 0 0 0 4px;
    background: linear-gradient(#e8eaee, #cdd0d6);
    color: #555;
}
.zoom-area {
    margin-left: auto;
    width: 107px;
    display: flex;
    align-items: center;
    gap: 3px;
    padding-right: 6px;
}
.view-on {
    width: 9px;
    height: 8px;
    background: #f4d67a;
    border: 1px solid #c99a2e;
}
.view-off {
    width: 7px;
    height: 7px;
    border: 1px solid #8a9098;
}
.slider {
    flex: 1;
    height: 8px;
    display: flex;
    align-items: center;
    justify-content: space-between;
    margin-left: 2px;
    background: linear-gradient(transparent 3.5px, #aab 3.5px, #aab 4.5px, transparent 4.5px);
}
.slider i {
    width: 7px;
    height: 7px;
    background: #eef0f3;
    border: 1px solid #8a9098;
    border-radius: 50%;
}
.slider b {
    width: 4px;
    height: 7px;
    background: #eef0f3;
    border: 1px solid #8a9098;
}
.explorer-views {
    flex: 1;
    display: flex;
    flex-direction: column;
    align-items: flex-end;
    justify-content: space-between;
    padding: 8px 15px 1px 0;
    background: #fff;
    color: #666;
    font-size: 7px;
    line-height: 6px;
}
.views-chevron {
    margin-right: -7px;
}
.views-icons {
    display: flex;
    gap: 1px;
}
.views-icons i {
    width: 7px;
    height: 8px;
    background: #cfe4f7;
    border: 1px solid #7fb0de;
}
.taskbar {
    position: absolute;
    left: 0;
    bottom: 0;
    width: 727px;
    height: 13px;
    display: flex;
    align-items: flex-start;
    gap: 14px;
    padding: 3px 0 0 6px;
    overflow: hidden;
    background: linear-gradient(90deg, #9c8a6a, #8c7a5c 70%, #86704f);
}
.taskbar svg {
    width: 15px;
    height: 15px;
    flex: none;
}
.tray {
    position: absolute;
    right: 0;
    top: 0;
    width: 147px;
    height: 13px;
    display: flex;
    align-items: center;
    justify-content: space-between;
    padding: 0 17px 0 66px;
    background: linear-gradient(170deg, transparent 20%, #b5754a 22%, #b5754a 60%, #8a6f52 75%);
    color: #eee;
    font-size: 5.5px;
    white-space: nowrap;
}
.tray-icons {
    font-size: 6px;
}
```
